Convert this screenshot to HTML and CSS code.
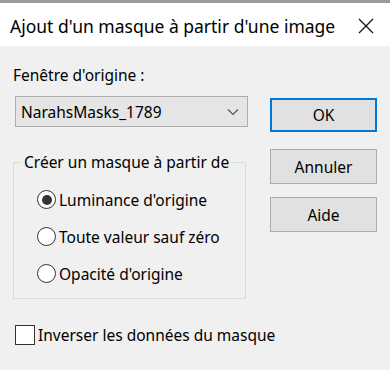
FILE: index.html
```html
<!DOCTYPE html>
<html lang="fr">
<head>
    <meta charset="UTF-8">
    <meta name="viewport" content="width=device-width, initial-scale=1.0">
    <title>Ajout d'un masque à partir d'une image</title>
    <link rel="stylesheet" href="styles.css">
</head>
<body>
    <div class="dialog">
        <div class="titlebar">
            <span class="title">Ajout d'un masque à partir d'une image</span>
            <span class="close-btn">
                <svg width="16" height="16" viewBox="0 0 16 16"><path d="M1 1 L15 15 M15 1 L1 15" stroke="#111" stroke-width="1.2" fill="none"/></svg>
            </span>
        </div>
        <div class="content">
            <div class="main">
                <div class="left-col">
                    <label class="field-label">Fenêtre d'origine :</label>
                    <div class="select">
                        <span>NarahsMasks_1789</span>
                        <svg width="12" height="8" viewBox="0 0 12 8"><path d="M1 1.5 L6 6.5 L11 1.5" stroke="#555" stroke-width="1.2" fill="none"/></svg>
                    </div>
                    <fieldset class="group">
                        <legend>Créer un masque à partir de</legend>
                        <div class="radio-row">
                            <span class="radio checked"></span>
                            <span>Luminance d'origine</span>
                        </div>
                        <div class="radio-row">
                            <span class="radio"></span>
                            <span>Toute valeur sauf zéro</span>
                        </div>
                        <div class="radio-row">
                            <span class="radio"></span>
                            <span>Opacité d'origine</span>
                        </div>
                    </fieldset>
                </div>
                <div class="right-col">
                    <button class="btn default">OK</button>
                    <button class="btn">Annuler</button>
                    <button class="btn">Aide</button>
                </div>
            </div>
            <div class="check-row">
                <span class="checkbox"></span>
                <span>Inverser les données du masque</span>
            </div>
        </div>
    </div>
</body>
</html>
```

FILE: styles.css
```css
body {
    margin: 0;
    font-family: 'Noto Sans', 'Open Sans', sans-serif;
    color: #000;
    background: #f0f0f0;
}
.dialog {
    width: 390px;
    height: 370px;
    background: #f0f0f0;
    overflow: hidden;
}
.titlebar {
    height: 43px;
    border-top: 3px solid #9c9a9c;
    background: #fff;
    display: flex;
    align-items: center;
    justify-content: space-between;
    padding: 0 16px 0 10px;
}
.title {
    font-size: 17.5px;
    margin-top: 2px;
}
.close-btn {
    display: flex;
    margin-top: 2px;
}
.content {
    padding: 19px 13px 0 13px;
}
.main {
    display: flex;
    gap: 22px;
}
.left-col {
    width: 235px;
    display: flex;
    flex-direction: column;
}
.field-label {
    font-size: 15.5px;
    line-height: 20px;
    margin-bottom: 11px;
}
.select {
    margin-left: 2px;
    height: 29px;
    border: 1px solid #adadad;
    background: #e5e5e5;
    display: flex;
    align-items: center;
    justify-content: space-between;
    padding: 0 8px 0 5px;
    font-size: 15.5px;
}
.group {
    margin: 25px 0 0 0;
    padding: 8px 0 0 8px;
    border: 1px solid #dcdcdc;
    width: 233px;
    box-sizing: border-box;
    height: 147px;
}
.group legend {
    font-size: 15.5px;
    line-height: 21px;
    padding: 0 2px;
}
.radio-row {
    display: flex;
    align-items: center;
    gap: 3px;
    font-size: 15.5px;
    height: 37px;
    margin-left: 15px;
}
.radio {
    width: 19px;
    height: 19px;
    border: 1.5px solid #333;
    border-radius: 50%;
    background: #fff;
    box-sizing: border-box;
    display: flex;
    align-items: center;
    justify-content: center;
}
.radio.checked::after {
    content: "";
    width: 10px;
    height: 10px;
    border-radius: 50%;
    background: #333;
}
.right-col {
    display: flex;
    flex-direction: column;
    gap: 13px;
    padding-top: 33px;
}
.btn {
    width: 107px;
    height: 35px;
    font-family: inherit;
    font-size: 15.5px;
    color: #000;
    background: #e1e1e1;
    border: 1px solid #adadad;
    padding: 0;
}
.btn.default {
    border: 2px solid #0078d7;
    height: 34px;
    margin-bottom: 4px;
}
.check-row {
    display: flex;
    align-items: center;
    gap: 3px;
    font-size: 15.5px;
    margin-top: 25px;
    margin-left: 2px;
}
.checkbox {
    width: 20px;
    height: 20px;
    box-sizing: border-box;
    border: 1.5px solid #333;
    background: #fff;
}
```
